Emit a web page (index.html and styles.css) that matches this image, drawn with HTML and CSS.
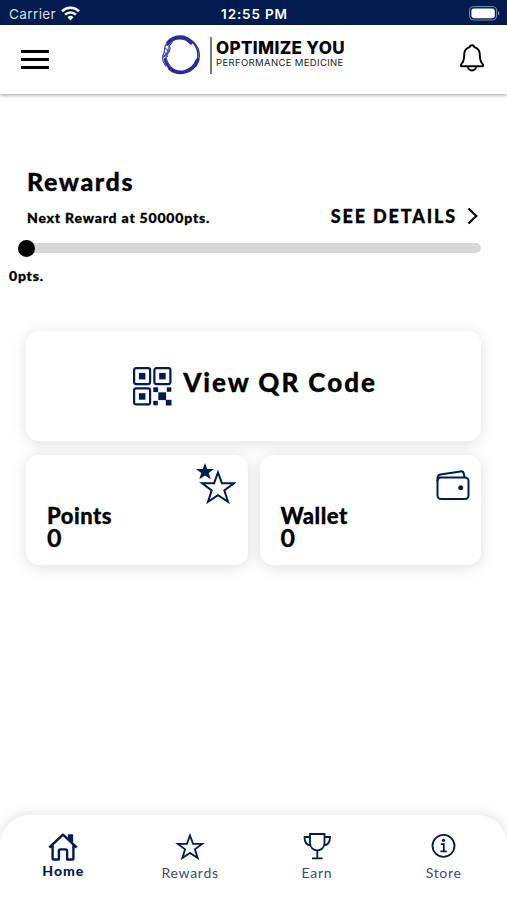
FILE: index.html
```html
<!DOCTYPE html>
<html lang="en">
<head>
    <meta charset="UTF-8">
    <meta name="viewport" content="width=device-width, initial-scale=1.0">
    <title>Optimize You - Rewards</title>
    <link rel="stylesheet" href="styles.css">
</head>
<body>

    <div class="status-bar">
        <div class="carrier">
            <span>Carrier</span>
            <svg width="19" height="15" viewBox="0 0 19 15" fill="none" stroke="#fff" stroke-width="2.6">
                <path d="M1 5.2a12.2 12.2 0 0 1 17 0"/>
                <path d="M4.1 8.6a7.8 7.8 0 0 1 10.8 0"/>
                <path d="M9.5 14.4l-3-3.2a4.3 4.3 0 0 1 6 0z" fill="#fff" stroke="none"/>
            </svg>
        </div>
        <div class="time">12:55 PM</div>
        <svg class="battery" width="31" height="15" viewBox="0 0 31 15">
            <rect x=".6" y=".6" width="27" height="13.4" rx="4" fill="none" stroke="#8290ad"/>
            <rect x="2.4" y="2.4" width="23.4" height="9.8" rx="2.4" fill="#fff"/>
            <path d="M29 5v4.6c1.9-.8 1.9-3.8 0-4.6z" fill="#8290ad"/>
        </svg>
    </div>

    <header class="header">
        <button class="menu" aria-label="Menu"><span></span><span></span><span></span></button>
        <div class="logo">
            <svg width="40" height="40" viewBox="0 0 40 40" fill="none" stroke="#262ba0" stroke-linecap="round">
                <path d="M7 8C13 .8 24 .4 30 7.500" stroke-width="4.200"/>
                <path d="M29 4.500C38.500 10 41 22 35 31" stroke-width="1.400"/>
                <path d="M31.500 7C38 14 38.500 24 33.500 32" stroke-width="1.300"/>
                <path d="M36.500 25C31.500 38 17.500 40.500 9 33.500" stroke-width="3.600"/>
                <path d="M11 34.500C6.500 31 4.800 28 4.400 24" stroke-width="3.200"/>
                <g stroke="#4a50b0" stroke-width="1.200">
                    <path d="M6 8C1.500 13 5 15 2.500 19C.5 23 2.500 28 5 31"/>
                    <path d="M11 7.500C5.500 12 9.500 15 6.500 19C3.500 22 6 27 9 31"/>
                    <path d="M5 10C11 11 10.500 16.500 2.500 22M4 13.500C8 14.500 7.500 19 2 21M3.500 17L6.500 21.500"/>
                </g>
            </svg>
            <div class="logo-text">
                <div class="logo-name">OPTIMIZE YOU</div>
                <div class="logo-sub">PERFORMANCE MEDICINE</div>
            </div>
        </div>
        <svg class="bell" width="26" height="30" viewBox="0 0 26 30" fill="none" stroke="#000" stroke-width="1.900" stroke-linejoin="round">
            <path d="M13 2.200c-1.400 0-2.200.9-2.400 1.900C7 5.200 5.200 8.200 5.200 11.800c0 5.500-1 7.600-3 9.500-.8.900-.4 2 .7 2h20.200c1.100 0 1.500-1.100.7-2-2-1.900-3-4-3-9.500 0-3.600-1.800-6.600-5.400-7.700-.2-1-1-1.900-2.400-1.900z"/>
            <path d="M9 23.500a4 4 0 0 0 8 0"/>
        </svg>
    </header>

    <main class="content">
        <section class="rewards">
            <h1>Rewards</h1>
            <div class="rewards-row">
                <span class="next-reward">Next Reward at 50000pts.</span>
                <a class="details">
                    <span>SEE DETAILS</span>
                    <svg width="12" height="18" viewBox="0 0 12 18" fill="none" stroke="#000" stroke-width="2.200"><path d="M1.500 1.500L9.300 9 1.500 16.500"/></svg>
                </a>
            </div>
            <div class="progress"><div class="progress-thumb"></div></div>
            <div class="progress-label">0pts.</div>
        </section>

        <section class="cards">
            <div class="card qr-card">
                <svg width="40" height="40" viewBox="0 0 40 40" fill="#001c50">
                    <g fill="none" stroke="#001c50" stroke-width="2.200">
                        <rect x="2.100" y="2.100" width="16" height="16" rx="2"/>
                        <rect x="22.400" y="2.100" width="16" height="16" rx="2"/>
                        <rect x="2.100" y="22.400" width="16" height="16" rx="2"/>
                    </g>
                    <rect x="6.900" y="6.900" width="6.500" height="6.500"/>
                    <rect x="27.200" y="6.900" width="6.500" height="6.500"/>
                    <rect x="6.900" y="27.200" width="6.500" height="6.500"/>
                    <rect x="21.300" y="21.300" width="4.800" height="4.800"/>
                    <rect x="34.800" y="21.300" width="4.500" height="4.500"/>
                    <rect x="26.300" y="26.300" width="7.800" height="7.800"/>
                    <rect x="21.300" y="34.800" width="4.500" height="4.500"/>
                    <rect x="33.800" y="33.800" width="5.700" height="5.700"/>
                </svg>
                <span>View QR Code</span>
            </div>
            <div class="card stat-card">
                <svg class="stat-icon" width="40" height="41" viewBox="0 0 40 41">
                    <path d="M9 0l2.200 6H18l-5.300 4 2 6.300L9 12.600l-5.700 3.700 2-6.300L0 6h6.800z" fill="#001c50"/>
                    <path d="M22 9.500l3.900 10.700h12L28.300 27.400l3.700 11.400-10-6.700-10 6.700 3.700-11.400-9.600-7.200h12z" fill="none" stroke="#001c50" stroke-width="2"/>
                </svg>
                <div class="stat-name">Points</div>
                <div class="stat-value">0</div>
            </div>
            <div class="card stat-card">
                <svg class="stat-icon wallet" width="34" height="31" viewBox="0 0 34 31" fill="none" stroke="#001c50" stroke-width="2">
                    <rect x="1.500" y="7.500" width="31" height="21.500" rx="3.500"/>
                    <path d="M1.500 11V8.500c0-2 1-3.500 3-3.900L24.500 1.400c2-.3 3 .8 3.300 2.300l.8 3.800"/>
                    <circle cx="24.700" cy="17.800" r="2.500" fill="#001c50" stroke="none"/>
                </svg>
                <div class="stat-name">Wallet</div>
                <div class="stat-value">0</div>
            </div>
        </section>
    </main>

    <nav class="tab-bar">
        <a class="tab active">
            <svg width="30" height="28" viewBox="0 0 30 28" fill="none" stroke="#001c50" stroke-width="2.400" stroke-linejoin="round">
                <path d="M1.300 14.500L15 1.700l13.700 12.800M4.600 12v13.200c0 .8.500 1.300 1.300 1.300h5V18c0-1 .6-1.600 1.600-1.600h5c1 0 1.600.6 1.600 1.600v8.500h5c.8 0 1.300-.5 1.300-1.300V12"/>
                <path d="M21 5V2.500h3V8z" fill="#001c50"/>
            </svg>
            <span>Home</span>
        </a>
        <a class="tab">
            <svg width="30" height="28" viewBox="0 0 30 28" fill="none" stroke="#001c50" stroke-width="1.800">
                <path d="M15 2.500l3.100 8.400h9.100l-7.300 5.500 2.800 8.700-7.700-5.200-7.700 5.200 2.800-8.700-7.300-5.500h9.100z"/>
            </svg>
            <span>Rewards</span>
        </a>
        <a class="tab">
            <svg width="30" height="28" viewBox="0 0 30 28" fill="none" stroke="#001c50" stroke-width="1.800">
                <path d="M8 1h14.500v9c0 4.500-3.300 7.500-7.200 7.500S8 14.500 8 10zM15.300 17.500v8M10 25.300h10.600M8 4H2.500c0 4.700 2 8 6 8.400M22.500 4H28c0 4.700-2 8-6 8.400"/>
            </svg>
            <span>Earn</span>
        </a>
        <a class="tab">
            <svg width="30" height="28" viewBox="0 0 30 28" fill="none" stroke="#001c50" stroke-width="1.800">
                <circle cx="14.500" cy="12.800" r="11"/>
                <path d="M11.800 11.100h3v6.800M11.500 18.300h6.300"/>
                <circle cx="14.500" cy="7.300" r="1.600" fill="#001c50" stroke="none"/>
            </svg>
            <span>Store</span>
        </a>
    </nav>

</body>
</html>
```

FILE: styles.css
```css
* {
    box-sizing: border-box;
}

body {
    margin: 0;
    height: 900px;
    display: flex;
    flex-direction: column;
    overflow: hidden;
    background-color: #fff;
    color: #000;
    font-family: Lato, "Liberation Sans", sans-serif;
}

svg {
    display: block;
    flex: none;
}

/* Status bar */
.status-bar {
    height: 25px;
    flex: none;
    display: grid;
    grid-template-columns: 1fr auto 1fr;
    align-items: center;
    padding: 2px 7px 0 9px;
    background-color: #001c4e;
    color: #fff;
    font-family: Inter, "Liberation Sans", sans-serif;
    font-size: 13.5px;
}

.carrier {
    display: flex;
    align-items: center;
    gap: 5px;
    color: #d8deea;
    letter-spacing: 0.4px;
}

.time {
    font-weight: 600;
    letter-spacing: 0.85px;
}

.battery {
    justify-self: end;
}

/* Header */
.header {
    height: 69px;
    flex: none;
    display: grid;
    grid-template-columns: 1fr auto 1fr;
    align-items: center;
    padding: 0 22px 0 21px;
    box-shadow: 0 1px 4px rgba(0, 0, 0, 0.4);
}

.menu {
    width: 28px;
    padding: 0;
    display: flex;
    flex-direction: column;
    gap: 5px;
    border: none;
    background: none;
}

.menu span {
    width: 28px;
    height: 3px;
    background-color: #000;
}

.logo {
    display: flex;
    align-items: center;
    gap: 9px;
    margin-bottom: 9px;
}

.logo-text {
    height: 37px;
    padding: 3px 0 0 4px;
    border-left: 2px solid #777;
    font-family: Inter, sans-serif;
    white-space: nowrap;
}

.logo-name {
    font-size: 17px;
    line-height: 17px;
    font-weight: 800;
    letter-spacing: 0.35px;
}

.logo-sub {
    margin-top: 1px;
    font-size: 9.5px;
    line-height: 10px;
    letter-spacing: 0.35px;
    color: #222;
}

.bell {
    justify-self: end;
    margin-bottom: 3px;
}

/* Rewards progress */
.content {
    flex: 1;
    padding: 73px 26px 0;
    -webkit-text-stroke: 0.3px #000;
}

h1 {
    margin: 0 1px;
    font-size: 25px;
    line-height: 28px;
    font-weight: 900;
    letter-spacing: 1.6px;
}

.rewards-row {
    display: flex;
    justify-content: space-between;
    align-items: center;
    height: 22px;
    margin: 10px 2px 0 1px;
}

.next-reward {
    font-size: 14px;
    font-weight: 900;
    letter-spacing: 0.8px;
    margin-top: 3px;
}

.details {
    display: flex;
    align-items: center;
    gap: 10px;
    font-size: 18px;
    font-weight: 900;
    letter-spacing: 1.85px;
}

.progress {
    height: 10px;
    margin-top: 16px;
    border-radius: 5px;
    background-color: #d8d8d8;
}

.progress-thumb {
    width: 17px;
    height: 17px;
    border-radius: 50%;
    background-color: #000;
    transform: translate(-8px, -3px);
}

.progress-label {
    margin: 14px 0 0 -17px;
    font-size: 14px;
    line-height: 18px;
    font-weight: 900;
    letter-spacing: 0.8px;
}

/* Cards */
.cards {
    display: grid;
    grid-template-columns: 1fr 1fr;
    gap: 14px 12px;
    margin-top: 46px;
}

.card {
    height: 110px;
    border-radius: 13px;
    background-color: #fff;
    box-shadow: 0 2px 16px rgba(0, 0, 0, 0.13);
}

.qr-card {
    grid-column: span 2;
    display: flex;
    align-items: center;
    justify-content: center;
    gap: 11px;
    padding-left: 2px;
    font-size: 26px;
    font-weight: 900;
    letter-spacing: 1.95px;
}

.qr-card span {
    margin-bottom: 8px;
}

.stat-card {
    position: relative;
    padding: 48px 21px 0;
}

.stat-icon {
    position: absolute;
    top: 8px;
    right: 12px;
}

.stat-icon.wallet {
    top: 15px;
    right: 11px;
}

.stat-name {
    font-size: 22px;
    line-height: 25px;
    font-weight: 900;
    letter-spacing: 0.5px;
}

.stat-value {
    font-size: 25px;
    line-height: 19px;
    font-weight: 700;
}

/* Bottom tabs */
.tab-bar {
    height: 85px;
    flex: none;
    display: grid;
    grid-template-columns: repeat(4, 1fr);
    padding-top: 18px;
    border-radius: 30px 30px 0 0;
    background-color: #fff;
    box-shadow: 0 -1px 14px rgba(0, 0, 0, 0.12);
}

.tab {
    display: flex;
    flex-direction: column;
    align-items: center;
    gap: 3px;
    color: #414b70;
    font-size: 14px;
    line-height: 18px;
    letter-spacing: 0.7px;
}

.tab.active {
    gap: 1px;
    color: #001c50;
    font-weight: 900;
    letter-spacing: 1px;
}
```
